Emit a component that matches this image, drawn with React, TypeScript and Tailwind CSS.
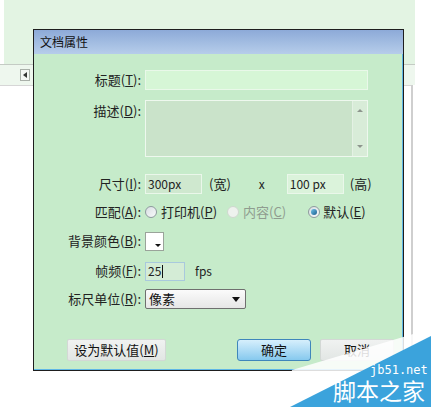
import React from "react";

const font = { fontFamily: '"Noto Sans CJK SC", "Noto Sans", sans-serif' };

const Key = ({ k }: { k: string }) => (
  <>
    (<span className="underline underline-offset-1">{k}</span>)
  </>
);

const Label = ({ text, k, top }: { text: string; k: string; top?: boolean }) => (
  <div
    className={`w-[111px] shrink-0 pr-[4px] text-right text-[13px] leading-[20px] text-[#222] ${
      top ? "self-start pt-[1px]" : ""
    }`}
  >
    {text}
    <Key k={k} />:
  </div>
);

const Radio = ({ checked, disabled }: { checked?: boolean; disabled?: boolean }) => (
  <span
    className={`flex h-[12px] w-[12px] items-center justify-center rounded-full border ${
      disabled ? "border-[#cfd8cf] bg-[#eef2ee]" : "border-[#8e9a9e] bg-gradient-to-br from-[#d9dfe3] to-[#f7f9fa]"
    }`}
  >
    {checked && <span className="h-[6px] w-[6px] rounded-full bg-gradient-to-br from-[#6fc3ea] to-[#1c5f8f]" />}
  </span>
);

export default function App() {
  return (
    <div className="relative h-[407px] w-[431px] overflow-hidden bg-white" style={font}>
      {/* application background */}
      <div className="ml-[4px] h-[64px] w-[411px] bg-[#e3f4e3]" />
      <div className="flex h-[21px] w-[415px] items-center border-t border-[#c4cbc4] bg-[#eef7ee]">
        <div className="ml-[20px] flex h-[12px] w-[10px] items-center justify-center border border-[#a9b0a9] bg-[#f4f6f4]">
          <span className="h-0 w-0 border-y-[3px] border-r-[4px] border-y-transparent border-r-[#333]" />
        </div>
      </div>
      <div className="flex h-[322px]">
        <div className="w-[411px] border-t border-[#d6d6d6]" />
        <div className="w-[2px] bg-[#cfcfcf]" />
      </div>

      {/* dialog */}
      <div className="absolute left-[33px] top-[29px] h-[342px] w-[371px] border border-[#1e1e1e] bg-[#c6ebca] shadow-[inset_-1px_-1px_0_#5fb7e6]">
        <div className="flex h-[24px] items-center bg-gradient-to-b from-[#8daad8] to-[#b6cdea] pl-[6px] text-[12px] text-[#111]">
          文档属性
        </div>

        <div className="flex flex-col">
          {/* 标题 */}
          <div className="mt-[16px] flex h-[20px] items-center">
            <Label text="标题" k="T" />
            <div className="h-[20px] w-[223px] border border-[#e9f8e9] bg-[#d6f6d6]" />
          </div>

          {/* 描述 */}
          <div className="mt-[10px] flex h-[57px]">
            <Label text="描述" k="D" top />
            <div className="flex h-[57px] w-[223px] border border-[#eef8ee] bg-[#cae3ca]">
              <div className="flex-1" />
              <div className="flex w-[15px] flex-col items-center justify-between border-l border-[#e4f1e4] bg-[#d8ecd8] py-[8px]">
                <span className="h-0 w-0 border-x-[3px] border-b-[3px] border-x-transparent border-b-[#8d958d]" />
                <span className="h-0 w-0 border-x-[3px] border-t-[3px] border-x-transparent border-t-[#8d958d]" />
              </div>
            </div>
          </div>

          {/* 尺寸 */}
          <div className="mt-[17px] flex h-[20px] items-center text-[12px] text-[#222]">
            <Label text="尺寸" k="I" />
            <div className="flex h-[20px] w-[57px] items-center border border-[#eaf7ea] bg-[#cfe8cf] pl-[2px]">300px</div>
            <span className="ml-[7px] text-[13px]">(宽)</span>
            <span className="ml-[28px]">x</span>
            <div className="ml-[22px] flex h-[20px] w-[57px] items-center border border-[#eaf7ea] bg-[#dbf3db] pl-[2px]">
              100 px
            </div>
            <span className="ml-[6px] text-[13px]">(高)</span>
          </div>

          {/* 匹配 */}
          <div className="mt-[8px] flex h-[20px] items-center text-[13px] text-[#222]">
            <Label text="匹配" k="A" />
            <Radio />
            <span className="ml-[4px]">
              打印机<Key k="P" />
            </span>
            <span className="ml-[10px] flex items-center text-[#8f9c8f]">
              <Radio disabled />
              <span className="ml-[4px]">
                内容<Key k="C" />
              </span>
            </span>
            <span className="ml-[22px] flex items-center">
              <Radio checked />
              <span className="ml-[3px]">
                默认<Key k="E" />
              </span>
            </span>
          </div>

          {/* 背景颜色 */}
          <div className="mt-[9px] flex h-[20px] items-center">
            <Label text="背景颜色" k="B" />
            <div className="relative h-[19px] w-[19px] border border-[#9aa39a] bg-white">
              <span className="absolute bottom-[3px] right-[2px] h-0 w-0 border-x-[3px] border-t-[3px] border-x-transparent border-t-[#111]" />
            </div>
          </div>

          {/* 帧频 */}
          <div className="mt-[10px] flex h-[20px] items-center text-[12px] text-[#222]">
            <Label text="帧频" k="F" />
            <div className="flex h-[19px] w-[40px] items-center border border-[#a9c9dd] bg-[#d4ecd6] pl-[2px]">
              25<span className="ml-[1px] h-[13px] w-[1px] bg-[#111]" />
            </div>
            <span className="ml-[10px]">fps</span>
          </div>

          {/* 标尺单位 */}
          <div className="mt-[8px] flex h-[20px] items-center text-[12px] text-[#111]">
            <Label text="标尺单位" k="R" />
            <div className="flex h-[20px] w-[101px] items-center justify-between rounded-[2px] border border-[#6f6f6f] bg-gradient-to-b from-[#fbfbfb] to-[#e6e6e6] pl-[3px] pr-[5px]">
              <span className="text-[13px]">像素</span>
              <span className="h-0 w-0 border-x-[4px] border-t-[5px] border-x-transparent border-t-[#111]" />
            </div>
          </div>

          {/* buttons */}
          <div className="mt-[30px] flex h-[22px] items-center text-[13px] text-[#111]">
            <div className="ml-[33px] flex h-[22px] w-[99px] items-center justify-center rounded-[2px] border border-[#d3d8d5] bg-gradient-to-b from-[#f0f2f1] to-[#e2e6e4]">
              设为默认值<Key k="M" />
            </div>
            <div className="ml-[71px] flex h-[22px] w-[74px] items-center justify-center rounded-[3px] border border-[#3f86bb] bg-gradient-to-b from-[#d6effc] to-[#86c9ee]">
              确定
            </div>
            <div className="ml-[9px] flex h-[22px] w-[74px] items-center justify-center rounded-[2px] border border-[#d3d8d5] bg-gradient-to-b from-[#f0f2f1] to-[#e2e6e4]">
              取消
            </div>
          </div>
        </div>
      </div>

      {/* watermark */}
      <svg className="absolute left-0 top-0" width="431" height="407" viewBox="0 0 431 407">
        <polygon points="292,370 420,332 431,332 431,407 284,407" fill="#ffffff" opacity="0.85" />
        <polygon points="290,407 431,336 431,407" fill="#3ba3dc" />
      </svg>
      <div
        className="absolute left-[370px] top-[363px] whitespace-nowrap text-[12px] leading-[14px] text-white"
        style={{ fontFamily: '"DejaVu Sans Mono", monospace' }}
      >
        jb51.net
      </div>
      <div className="absolute left-[333px] top-[378px] whitespace-nowrap text-[23px] leading-[25px] text-white">
        脚本之家
      </div>
    </div>
  );
}
